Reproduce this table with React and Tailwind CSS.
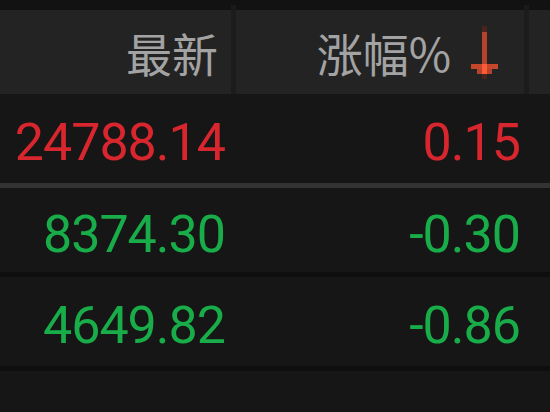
import React from 'react';

const rows = [
  { last: '24788.14', pct: '0.15', up: true },
  { last: '8374.30', pct: '-0.30', up: false },
  { last: '4649.82', pct: '-0.86', up: false },
];

const SortArrow = () => (
  <svg width="27" height="53" viewBox="0 0 27 53" className="shrink-0">
    <rect x="11" y="0" width="5" height="6" fill="#4a241c" />
    <rect x="11" y="6" width="5" height="32" fill="#b5432b" />
    <rect x="0" y="38" width="27" height="5" fill="#c4472c" />
    <rect x="6" y="43" width="15" height="5" fill="#b5432b" />
    <rect x="11" y="38" width="5" height="10" fill="#ff5a36" />
    <rect x="11" y="48" width="5" height="5" fill="#4a241c" />
  </svg>
);

const App = () => {
  return (
    <div className="w-[550px] h-[412px] overflow-hidden bg-[#161616]" style={{ fontFamily: 'Roboto, "Noto Sans CJK SC", sans-serif' }}>
      {/* top strip */}
      <div className="flex h-[10px] bg-[#121212]">
        <div className="w-[231px]" />
        <div className="w-[5px] mt-[5px] bg-[#1a1a1a]" />
        <div className="w-[288px]" />
        <div className="w-[5px] mt-[5px] bg-[#1a1a1a]" />
      </div>

      {/* Header */}
      <div className="flex h-[84px] bg-[#232323] text-[#a3a3a3]">
        <div className="w-[231px] flex items-center justify-end pr-[13px]">
          <span className="text-[46px] leading-none" style={{ fontFamily: '"Noto Sans CJK SC", sans-serif' }}>最新</span>
        </div>
        <div className="w-[5px] bg-[#1c1c1c]" />
        <div className="w-[288px] flex items-center justify-end pr-[26px] gap-[20px]">
          <span className="text-[46px] leading-none" style={{ fontFamily: '"Noto Sans CJK SC", sans-serif' }}>涨幅%</span>
          <SortArrow />
        </div>
        <div className="w-[5px] bg-[#1c1c1c]" />
        <div className="flex-1" />
      </div>

      {/* Rows */}
      {rows.map((r, i) => (
        <div key={i}>
          <div
            className={`flex ${i === 1 ? 'h-[84px]' : 'h-[89px]'} text-[52px] leading-none tracking-[-1px] ${
              r.up ? 'text-[#d8262e]' : 'text-[#19ad4a]'
            }`}
          >
            <div className="w-[231px] flex items-center justify-end pr-[6px] pt-[9px]">{r.last}</div>
            <div className="w-[5px]" />
            <div className="w-[288px] flex items-center justify-end pr-[4px] pt-[9px]">{r.pct}</div>
          </div>
          <div className={`h-[5px] ${i === 0 ? 'bg-[#333333]' : 'bg-[#0e0e0e]'}`} />
        </div>
      ))}
    </div>
  );
};

export default App;
